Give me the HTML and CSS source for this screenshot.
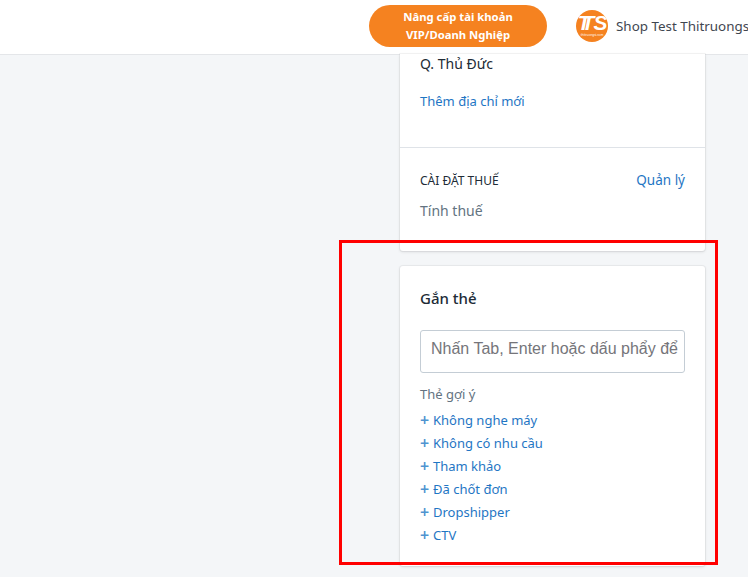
FILE: index.html
```html
<!DOCTYPE html>
<html lang="vi">
<head>
<meta charset="utf-8">
<title>Gắn thẻ</title>
<link rel="stylesheet" href="styles.css">
</head>
<body>
<header class="topbar">
  <a class="upgrade">Nâng cấp tài khoản<br>VIP/Doanh Nghiệp</a>
  <div class="shop">
    <span class="logo"><span class="logo-mark"><span class="logo-t">T</span>S</span><span class="logo-sub">thitruongsi.com</span></span>
    <span class="shop-name">Shop Test Thitruongsi</span>
  </div>
</header>
<main class="content">
  <section class="card">
    <div class="address">
      <p class="city">Q. Thủ Đức</p>
      <a class="link">Thêm địa chỉ mới</a>
    </div>
    <div class="tax">
      <div class="tax-head">
        <h3 class="tax-title">CÀI ĐẶT THUẾ</h3>
        <a class="link">Quản lý</a>
      </div>
      <p class="tax-text">Tính thuế</p>
    </div>
  </section>
  <section class="card tags">
    <h2 class="tags-title">Gắn thẻ</h2>
    <input class="tags-input" type="text" placeholder="Nhấn Tab, Enter hoặc dấu phẩy để thêm thẻ">
    <p class="hint">Thẻ gợi ý</p>
    <ul class="suggest">
      <li><a class="link"><span class="plus">+</span>Không nghe máy</a></li>
      <li><a class="link"><span class="plus">+</span>Không có nhu cầu</a></li>
      <li><a class="link"><span class="plus">+</span>Tham khảo</a></li>
      <li><a class="link"><span class="plus">+</span>Đã chốt đơn</a></li>
      <li><a class="link"><span class="plus">+</span>Dropshipper</a></li>
      <li><a class="link"><span class="plus">+</span>CTV</a></li>
    </ul>
  </section>
</main>
<div class="annotation"></div>
</body>
</html>
```
FILE: styles.css
```css
* { box-sizing: border-box; }
html, body { margin: 0; height: 100%; overflow: hidden; }
body {
  background: #f4f6f8;
  font-family: "Noto Sans", "Open Sans", sans-serif;
  font-size: 14px;
  color: #212b36;
}
.topbar {
  height: 55px;
  background: #fff;
  border-bottom: 1px solid #e4e6e9;
  display: flex;
  align-items: center;
  padding: 0 0 2px 369px;
  white-space: nowrap;
  overflow: hidden;
}
.upgrade {
  flex: none;
  width: 178px;
  height: 42px;
  border-radius: 21px;
  background: #f58220;
  color: #fff;
  font-size: 11.3px;
  font-weight: 700;
  line-height: 18px;
  text-align: center;
  padding-top: 3px;
}
.shop { display: flex; align-items: center; margin-left: 29px; flex: none; }
.logo {
  width: 32px;
  height: 32px;
  border-radius: 50%;
  background: #f58220;
  color: #fff;
  display: flex;
  flex-direction: column;
  align-items: center;
  overflow: hidden;
}
.logo-mark {
  font-family: "Liberation Sans", sans-serif;
  font-size: 21px;
  font-weight: 700;
  font-style: italic;
  line-height: 20px;
  margin-top: 3px;
  padding-left: 4px;
  letter-spacing: -1px;
}
.logo-t { text-shadow: -4px 0 0 #fff; }
.logo-sub { font-size: 3px; line-height: 4px; white-space: nowrap; }
.shop-name { margin-left: 8px; font-size: 13.4px; color: #3f4650; }
.content { width: 305px; margin-left: 400px; margin-top: -1px; }
.card {
  background: #fff;
  border-radius: 0 0 3px 3px;
  box-shadow: 0 0 0 1px rgba(63,63,68,.05), 0 1px 3px 0 rgba(63,63,68,.15);
}
.address { height: 94px; padding: 0 20px; border-bottom: 1px solid #dfe3e8; }
.city { margin: 0; line-height: 20px; font-size: 14px; }
.link { color: #1f76c4; }
.address .link { display: block; margin-top: 17px; font-size: 13px; line-height: 20px; }
.tax { height: 103px; padding: 22px 20px 0; }
.tax-head { display: flex; justify-content: space-between; align-items: center; height: 20px; }
.tax-title { margin: 0; font-size: 12px; font-weight: 400; color: #212b36; }
.tax-head .link { font-size: 13.5px; }
.tax-text { margin: 11px 0 0; line-height: 20px; color: #637381; }
.tags { margin-top: 15px; height: 300px; padding: 22px 20px 0; border-radius: 3px; }
.tags-title { margin: 0; font-size: 15px; font-weight: 500; line-height: 20px; }
.tags-input {
  display: block;
  width: 100%;
  height: 43px;
  margin-top: 22px;
  padding: 0 6px 6px 10px;
  border: 1px solid #c4cdd5;
  border-radius: 3px;
  background: #fff;
  font-family: "Liberation Sans", sans-serif;
  font-size: 16px;
}
.tags-input::placeholder { color: #75757a; opacity: 1; }
.hint { margin: 11px 0 0; line-height: 20px; font-size: 13px; color: #637381; }
.suggest { list-style: none; margin: 5px 0 0; padding: 0; }
.suggest li { height: 23px; line-height: 23px; font-size: 13px; }
.plus { display: inline-block; width: 13px; font-size: 16px; font-weight: 600; line-height: 15px; vertical-align: -1px; color: #4f94d0; }
.annotation {
  position: absolute;
  left: 339px;
  top: 240px;
  width: 379px;
  height: 325px;
  border: 3px solid #ff0000;
}
```
